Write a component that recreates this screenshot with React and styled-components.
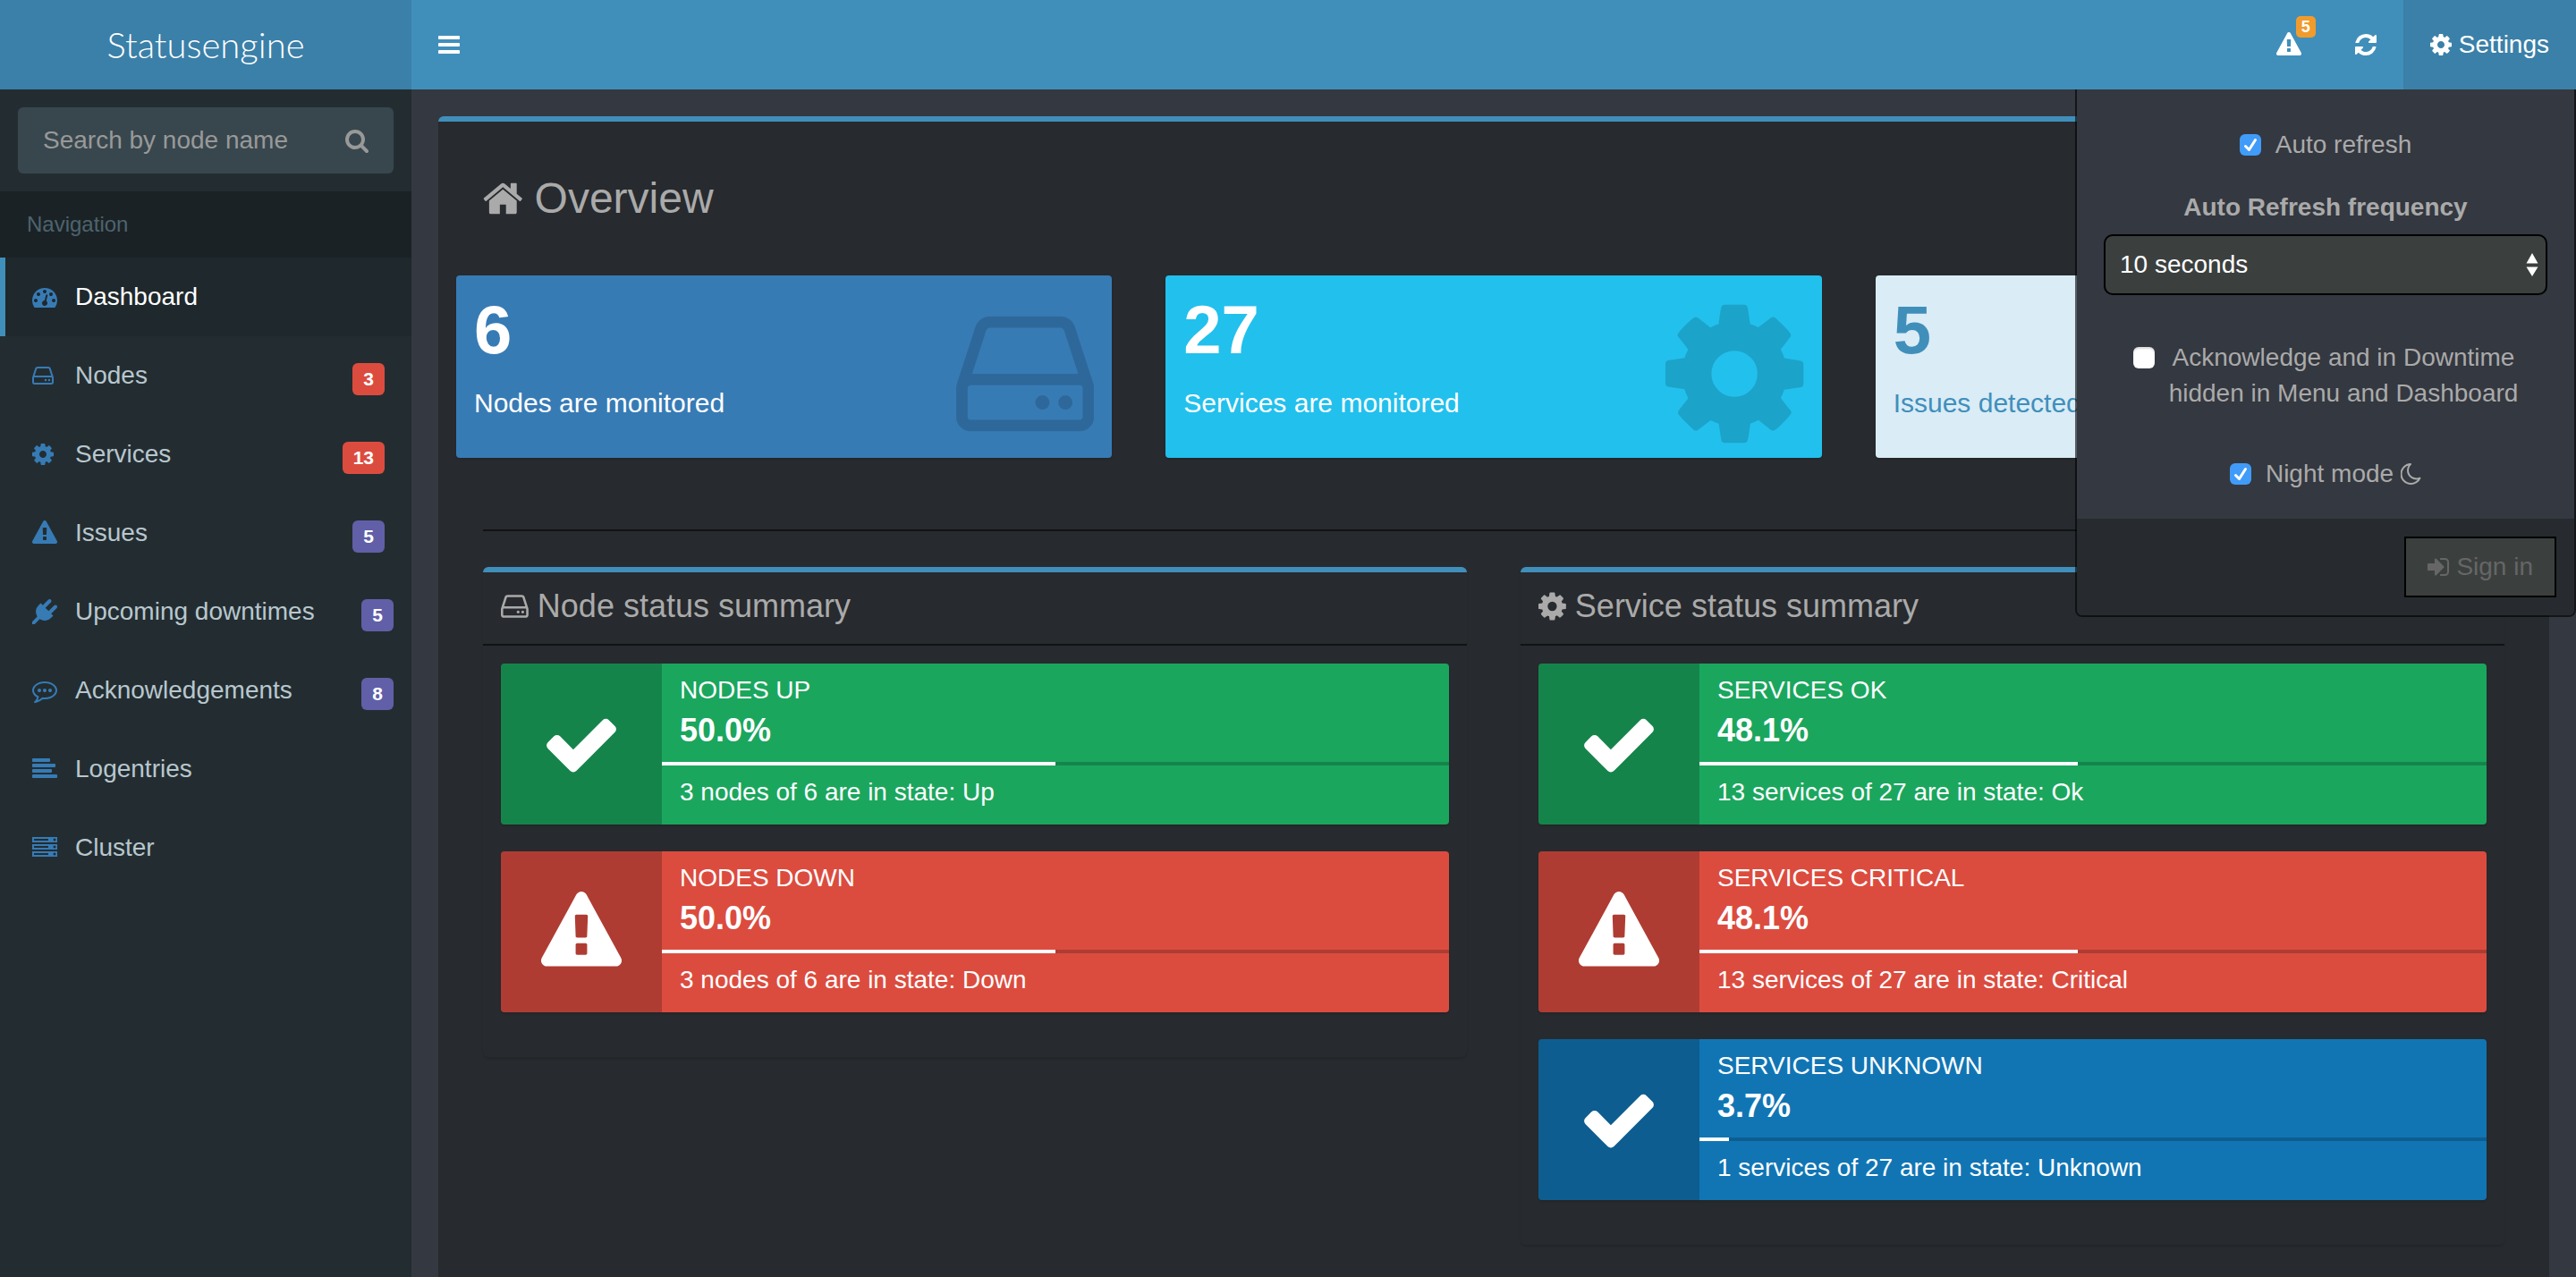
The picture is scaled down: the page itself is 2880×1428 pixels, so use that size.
import React, { useState } from 'react';
import styled, { createGlobalStyle } from 'styled-components';

const color = {
  header: '#408fbb',
  headerDark: '#3b80a8',
  sidebar: '#232d31',
  sidebarHeader: '#1b2225',
  sidebarActive: '#1f282c',
  page: '#343840',
  box: '#272a2e',
  line: '#111214',
  field: '#3b403f',
  text: '#aaaaaa',
  icon: '#377bb5',
  red: '#db4c3f',
  purple: '#615fa7',
  orange: '#f19b2d',
  green: '#1ba65e',
  blue: '#1175b4',
  aqua: '#22c0ed',
};

/* Each glyph: left edge, width and outline on a 1792-unit em. */
const glyphs = {
  bars: [128, 1536, 'M1664 1344v128q0 26-19 45t-45 19h-1408q-26 0-45-19t-19-45v-128q0-26 19-45t45-19h1408q26 0 45 19t19 45zm0-512v128q0 26-19 45t-45 19h-1408q-26 0-45-19t-19-45v-128q0-26 19-45t45-19h1408q26 0 45 19t19 45zm0-512v128q0 26-19 45t-45 19h-1408q-26 0-45-19t-19-45v-128q0-26 19-45t45-19h1408q26 0 45 19t19 45z'],
  cog: [128, 1536, 'M1152 896q0-106-75-181t-181-75-181 75-75 181 75 181 181 75 181-75 75-181zm512-109v222q0 12-8 23t-20 13l-185 28q-19 54-39 91 35 50 107 138 10 12 10 25t-9 23q-27 37-99 108t-94 71q-12 0-26-9l-138-108q-44 23-91 38-16 136-29 186-7 28-36 28h-222q-14 0-24.5-8.5t-11.5-21.5l-28-184q-49-16-90-37l-141 107q-10 9-25 9-14 0-25-11-126-114-165-168-7-10-7-23 0-12 8-23 15-21 51-66.5t54-70.5q-27-50-41-99l-183-27q-13-2-21-12.5t-8-23.5v-222q0-12 8-23t19-13l186-28q14-46 39-92-40-57-107-138-10-12-10-24 0-10 9-23 26-36 98.5-107.5t94.5-71.5q13 0 26 10l138 107q44-23 91-38 16-136 29-186 7-28 36-28h222q14 0 24.5 8.5t11.5 21.5l28 184q49 16 90 37l142-107q9-9 24-9 13 0 25 10 129 119 165 170 7 8 7 22 0 12-8 23-15 21-51 66.5t-54 70.5q26 50 41 98l183 28q13 2 21 12.5t8 23.5z'],
  warning: [0, 1792, 'M1024 1375v-190q0-14-9.5-23.5t-22.5-9.5h-192q-13 0-22.5 9.5t-9.5 23.5v190q0 14 9.5 23.5t22.5 9.5h192q13 0 22.5-9.5t9.5-23.5zm-2-374l18-459q0-12-10-19-13-11-24-11h-220q-11 0-24 11-10 7-10 21l17 457q0 10 10 16.5t24 6.5h185q14 0 23.5-6.5t10.500-16.5zm-14-934l768 1408q35 63-2 126-17 29-46.5 46t-63.5 17h-1536q-34 0-63.500-17t-46.500-46q-37-63-2-126l768-1408q17-31 47-49t65-18 65 18 47 49z'],
  refresh: [128, 1536, 'M1639 1056q0 5-1 7-64 268-268 434.5t-478 166.5q-146 0-282.5-55t-243.5-157l-129 129q-19 19-45 19t-45-19-19-45v-448q0-26 19-45t45-19h448q26 0 45 19t19 45-19 45l-137 137q71 66 161 102t187 36q134 0 250-65t186-179q11-17 53-117 8-23 30-23h192q13 0 22.5 9.5t9.5 22.5zm25-800v448q0 26-19 45t-45 19h-448q-26 0-45-19t-19-45 19-45l138-138q-148-137-349-137-134 0-250 65t-186 179q-11 17-53 117-8 23-30 23h-199q-13 0-22.5-9.5t-9.5-22.5v-7q65-268 270-434.5t480-166.5q146 0 284 55.5t245 156.5l130-129q19-19 45-19t45 19 19 45z'],
  search: [64, 1664, 'M1216 832q0-185-131.5-316.5t-316.5-131.5-316.5 131.5-131.5 316.5 131.5 316.5 316.5 131.5 316.5-131.5 131.5-316.5zm512 832q0 52-38 90t-90 38q-54 0-90-38l-343-342q-179 124-399 124-143 0-273.5-55.5t-225-150-150-225-55.5-273.5 55.5-273.5 150-225 225-150 273.5-55.5 273.5 55.5 225 150 150 225 55.5 273.5q0 220-124 399l343 343q37 37 37 90z'],
  dashboard: [0, 1792, 'M384 1152q0-53-37.5-90.5t-90.5-37.5-90.5 37.5-37.5 90.5 37.5 90.5 90.5 37.5 90.5-37.5 37.5-90.5zm192-448q0-53-37.5-90.5t-90.5-37.5-90.5 37.5-37.5 90.5 37.5 90.5 90.5 37.5 90.5-37.5 37.5-90.5zm428 481l101-382q6-26-7.5-48.5t-38.5-29.5-48 6.5-30 39.5l-101 382q-60 5-107 43.5t-63 98.5q-20 77 20 146t117 89 146-20 89-117q16-60-6-117t-72-91zm660-33q0-53-37.5-90.5t-90.5-37.5-90.5 37.5-37.5 90.5 37.5 90.5 90.5 37.5 90.5-37.5 37.5-90.5zm-640-640q0-53-37.5-90.5t-90.5-37.5-90.5 37.5-37.5 90.5 37.5 90.5 90.5 37.5 90.5-37.5 37.5-90.5zm448 192q0-53-37.5-90.5t-90.5-37.5-90.5 37.5-37.5 90.5 37.5 90.5 90.5 37.5 90.5-37.5 37.5-90.5zm320 448q0 261-141 483-19 29-54 29h-1402q-35 0-54-29-141-221-141-483 0-182 71-348t191-286 286-191 348-71 348 71 286 191 191 286 71 348z'],
  disk: [128, 1536, 'M1168 1216q0 33-23.5 56.5t-56.5 23.5-56.5-23.5-23.5-56.5 23.5-56.5 56.5-23.5 56.5 23.5 23.5 56.5zm256 0q0 33-23.5 56.5t-56.5 23.5-56.5-23.5-23.5-56.5 23.5-56.5 56.5-23.5 56.5 23.5 23.5 56.5zm112 160v-320q0-13-9.5-22.5t-22.5-9.5h-1216q-13 0-22.5 9.5t-9.5 22.5v320q0 13 9.5 22.5t22.5 9.5h1216q13 0 22.5-9.5t9.5-22.5zm-1230-480h1180l-157-482q-4-13-16-21.5t-26-8.5h-782q-14 0-26 8.5t-16 21.5zm1358 160v320q0 66-47 113t-113 47h-1216q-66 0-113-47t-47-113v-320q0-25 16-75l197-606q17-53 63-86t101-33h782q55 0 101 33t63 86l197 606q16 50 16 75z'],
  plug: [0, 1792, 'M1755 453q37 38 37 90.5t-37 90.5l-401 400 150 150-160 160q-163 163-389.5 186.5t-411.5-100.5l-362 362h-181v-181l362-362q-124-185-100.5-411.5t186.5-389.5l160-160 150 150 400-401q38-37 91-37t90 37 37 90.5-37 90.5l-400 401 234 234 401-400q38-37 91-37t90 37z'],
  comment: [0, 1792, 'M640 896q0 53-37.5 90.5t-90.5 37.5-90.5-37.5-37.5-90.5 37.5-90.5 90.5-37.5 90.5 37.5 37.5 90.5zm384 0q0 53-37.5 90.5t-90.5 37.5-90.5-37.5-37.5-90.5 37.5-90.5 90.5-37.5 90.5 37.5 37.5 90.5zm384 0q0 53-37.5 90.5t-90.5 37.5-90.5-37.5-37.5-90.5 37.5-90.5 90.5-37.5 90.5 37.5 37.5 90.5zm-512-512q-204 0-381.5 69.5t-282 187.5-104.5 255q0 112 71.5 213.5t201.5 175.5l87 50-27 96q-24 91-70 172 152-63 275-171l43-38 57 6q69 8 130 8 204 0 381.5-69.5t282-187.5 104.5-255-104.5-255-282-187.5-381.5-69.5zm896 512q0 174-120 321.5t-326 233-450 85.5q-70 0-145-8-198 175-460 242-49 14-114 22h-5q-15 0-27-10.5t-16-27.5v-1q-3-4-.5-12t2-10 4.500-9.500l6-9 7-8.500 8-9q7-8 31-34.500t34.500-38 31-39.500 32.500-51 27-59 26-76q-157-89-247.500-220t-90.500-281q0-130 71-248.500t191-204.500 286-136.500 348-50.500 348 50.500 286 136.500 191 204.500 71 248.500z'],
  lines: [0, 1792, 'M1792 1344v128q0 26-19 45t-45 19h-1664q-26 0-45-19t-19-45v-128q0-26 19-45t45-19h1664q26 0 45 19t19 45zm-384-384v128q0 26-19 45t-45 19h-1280q-26 0-45-19t-19-45v-128q0-26 19-45t45-19h1280q26 0 45 19t19 45zm256-384v128q0 26-19 45t-45 19h-1536q-26 0-45-19t-19-45v-128q0-26 19-45t45-19h1536q26 0 45 19t19 45zm-384-384v128q0 26-19 45t-45 19h-1152q-26 0-45-19t-19-45v-128q0-26 19-45t45-19h1152q26 0 45 19t19 45z'],
  server: [0, 1792, 'M128 1408h1024v-128h-1024v128zm0-512h1024v-128h-1024v128zm1568 448q0-40-28-68t-68-28-68 28-28 68 28 68 68 28 68-28 28-68zm-1568-960h1024v-128h-1024v128zm1568 448q0-40-28-68t-68-28-68 28-28 68 28 68 68 28 68-28 28-68zm0-512q0-40-28-68t-68-28-68 28-28 68 28 68 68 28 68-28 28-68zm96 832v384h-1792v-384h1792zm0-512v384h-1792v-384h1792zm0-512v384h-1792v-384h1792z'],
  check: [0, 1792, 'M1671 566q0 40-28 68l-724 724-136 136q-28 28-68 28t-68-28l-136-136-362-362q-28-28-28-68t28-68l136-136q28-28 68-28t68 28l294 295 656-657q28-28 68-28t68 28l136 136q28 28 28 68z'],
  moon: [160, 1472, 'M1390 1303q-54 9-110 9-182 0-337-90t-245-245-90-337q0-192 104-357-201 60-328.5 229t-127.5 384q0 130 51 248.5t136.5 204 204 136.5 248.5 51q144 0 273.5-61.5t220.5-171.5zm203-85q-94 203-283.5 324.5t-413.5 121.5q-156 0-298-61t-245-164-164-245-61-298q0-153 57.5-292.5t156-241.5 235.5-164.5 290-68.5q44-2 61 39 18 41-15 72-86 78-131.5 181.5t-45.5 218.5q0 148 73 273t198 198 273 73q118 0 228-51 41-18 72 13 14 14 17.5 34t-4.5 38z'],
  signIn: [128, 1536, 'M1312 896q0 26-19 45l-544 544q-19 19-45 19t-45-19-19-45v-288h-448q-26 0-45-19t-19-45v-384q0-26 19-45t45-19h448v-288q0-26 19-45t45-19 45 19l544 544q19 19 19 45zm352-352v704q0 119-84.5 203.5t-203.5 84.5h-320q-13 0-22.5-9.5t-9.5-22.5q0-4-1-20t-.5-26.5 3-23.5 10-19.5 20.5-6.5h320q66 0 113-47t47-113v-704q0-66-47-113t-113-47h-312l-11.5-1-11.5-3-8-5.5-7-9-2-13.500q0-4-1-20t-.5-26.500 3-23.500 10-19.500 20.500-6.500h320q119 0 203.500 84.500t84.500 203.500z'],
  home: [64, 1664, 'M1472 992v480q0 26-19 45t-45 19h-384v-384h-256v384h-384q-26 0-45-19t-19-45v-480q0-1 .5-3t.5-3l575-474 575 474q1 2 1 6zm223-69l-62 74q-8 9-21 11h-3q-13 0-21-7l-692-577-692 577q-12 8-24 7-13-2-21-11l-62-74q-8-10-7-23.5t11-21.5l719-599q32-26 76-26t76 26l244 204v-195q0-14 9-23t23-9h192q14 0 23 9t9 23v408l219 182q10 8 11 21.5t-7 23.5z'],
};

const Svg = styled.svg`
  display: block;
  flex: none;
  height: ${(p) => p.$size}px;
  fill: currentColor;
`;

function Icon({ name, size = 28 }) {
  const [left, width, d] = glyphs[name];
  return (
    <Svg $size={size} viewBox={`${left} 0 ${width} 1792`} aria-hidden="true">
      <path d={d} />
    </Svg>
  );
}

const GlobalStyle = createGlobalStyle`
  *, *::before, *::after { box-sizing: border-box; }
  body {
    margin: 0;
    background: ${color.page};
    color: ${color.text};
    font-family: "Liberation Sans", Arial, Helvetica, sans-serif;
    font-size: 28px;
    line-height: 40px;
  }
  h1, h2, p { margin: 0; font-weight: 400; }
  button, input, select { font: inherit; color: inherit; margin: 0; }
  a { color: inherit; text-decoration: none; }
`;

const Page = styled.div`
  display: flex;
  flex-direction: column;
  min-height: 100vh;
`;

const Header = styled.header`
  display: flex;
  height: 100px;
  background: ${color.header};
  color: #fff;
`;

const Logo = styled.a`
  flex: none;
  width: 460px;
  background: ${color.headerDark};
  font-family: Lato, "Liberation Sans", sans-serif;
  font-size: 40px;
  font-weight: 300;
  line-height: 100px;
  text-align: center;
`;

const TopNav = styled.nav`
  display: flex;
  flex: 1;
  justify-content: space-between;
`;

const TopGroup = styled.div`
  position: relative;
  display: flex;
`;

const TopButton = styled.button`
  position: relative;
  display: flex;
  align-items: center;
  gap: 8px;
  padding: 0 30px;
  border: 0;
  background: ${(p) => (p.$open ? color.headerDark : 'transparent')};
  cursor: pointer;
`;

const AlertCount = styled.span`
  position: absolute;
  top: 18px;
  right: 14px;
  padding: 0 6px;
  border-radius: 5px;
  background: ${color.orange};
  font-size: 18px;
  font-weight: 700;
  line-height: 24px;
`;

const SettingsPanel = styled.form`
  position: absolute;
  top: 100px;
  right: 0;
  z-index: 2;
  width: 560px;
  border: 2px solid rgba(0, 0, 0, 0.6);
  border-top: 0;
  border-radius: 0 0 8px 8px;
  background: ${color.page};
  background-clip: padding-box;
  color: ${color.text};
`;

const SettingsBody = styled.div`
  display: flex;
  flex-direction: column;
  padding: 42px 30px 30px;
`;

const CheckLabel = styled.label`
  display: flex;
  justify-content: center;
  gap: 16px;
  text-align: center;
`;

const CheckText = styled.span`
  display: flex;
  align-items: center;
  gap: 8px;
  white-space: pre-line;
`;

const CheckWrap = styled.span`
  display: grid;
  flex: none;
  width: 24px;
  height: 24px;
  margin-top: 8px;
  > * { grid-area: 1 / 1; }
`;

const CheckInput = styled.input`
  appearance: none;
  width: 24px;
  height: 24px;
  border-radius: 6px;
  background: #fff;
  box-shadow: inset 0 2px 2px rgba(0, 0, 0, 0.15);
  &:checked {
    background: #419bf9;
    box-shadow: none;
  }
  & + svg { visibility: hidden; }
  &:checked + svg { visibility: visible; }
`;

const Tick = styled.svg`
  width: 24px;
  height: 24px;
  fill: none;
  stroke: #fff;
  stroke-width: 3;
  stroke-linecap: round;
  stroke-linejoin: round;
  pointer-events: none;
`;

const FieldLabel = styled.label`
  margin: 30px 0 10px;
  font-weight: 700;
  text-align: center;
`;

const SelectWrap = styled.div`
  display: grid;
  align-items: center;
  margin-bottom: 50px;
  > * { grid-area: 1 / 1; }
`;

const Select = styled.select`
  appearance: none;
  width: 100%;
  height: 68px;
  padding: 0 16px;
  border: 2px solid #000;
  border-radius: 10px;
  background: ${color.field};
  color: #fff;
`;

const SelectArrows = styled.svg`
  justify-self: end;
  width: 14px;
  height: 30px;
  margin-right: 10px;
  fill: #fff;
  pointer-events: none;
`;

const NightRow = styled.div`
  margin-top: 50px;
`;

const SettingsFooter = styled.div`
  display: flex;
  justify-content: flex-end;
  padding: 20px;
  border-radius: 0 0 6px 6px;
  background: ${color.box};
`;

const SignInButton = styled.button`
  display: flex;
  align-items: center;
  gap: 8px;
  height: 68px;
  padding: 0 24px;
  border: 2px solid #000;
  background: ${color.field};
  color: #666;
`;

const Columns = styled.div`
  display: flex;
  flex: 1;
`;

const Sidebar = styled.aside`
  flex: none;
  width: 460px;
  background: ${color.sidebar};
  color: #b8c7ce;
`;

const SearchForm = styled.form`
  display: flex;
  align-items: center;
  height: 74px;
  margin: 20px;
  border-radius: 6px;
  background: #38474e;
  color: #999;
`;

const SearchInput = styled.input`
  flex: 1;
  min-width: 0;
  height: 74px;
  padding: 0 0 0 28px;
  border: 0;
  outline: 0;
  background: transparent;
  &::placeholder { color: #999; opacity: 1; }
`;

const SearchButton = styled.button`
  padding: 0 28px;
  border: 0;
  background: transparent;
`;

const NavHeading = styled.div`
  padding: 17px 30px;
  background: ${color.sidebarHeader};
  color: #4d646e;
  font-size: 24px;
`;

const NavLink = styled.a`
  display: flex;
  align-items: center;
  height: 88px;
  padding: 0 ${(p) => (p.$wide ? 20 : 30)}px 0 30px;
  border-left: 6px solid ${(p) => (p.$active ? color.header : 'transparent')};
  background: ${(p) => (p.$active ? color.sidebarActive : 'transparent')};
  color: ${(p) => (p.$active ? '#fff' : 'inherit')};
`;

const NavIcon = styled.span`
  width: 48px;
  color: ${color.icon};
`;

const NavText = styled.span`
  flex: 1;
  white-space: nowrap;
`;

const Badge = styled.span`
  margin-top: 8px;
  padding: 0 12px;
  border-radius: 6px;
  background: ${(p) => p.$color};
  color: #fff;
  font-size: 21px;
  font-weight: 700;
  line-height: 36px;
`;

const Content = styled.main`
  display: flex;
  flex: 1;
  flex-direction: column;
  min-width: 0;
  padding: 30px 30px 0;
`;

const Box = styled.section`
  flex: 1;
  border-top: 6px solid ${color.header};
  border-radius: 6px 6px 0 0;
  background: ${color.box};
`;

const Title = styled.h1`
  display: flex;
  align-items: center;
  gap: 13px;
  padding: 60px 50px;
  font-size: 48px;
  line-height: 52px;
`;

const Tiles = styled.div`
  display: grid;
  grid-template-columns: repeat(3, 1fr);
  gap: 60px;
  padding: 0 20px;
`;

const Tile = styled.a`
  display: flex;
  justify-content: space-between;
  padding: 20px;
  border-radius: 4px;
  background: ${(p) => p.$color};
  box-shadow: 0 2px 2px rgba(0, 0, 0, 0.1);
  color: ${(p) => p.$ink};
`;

const TileText = styled.div`
  padding-bottom: 20px;
`;

const TileNumber = styled.p`
  margin-bottom: 20px;
  font-size: 76px;
  font-weight: 700;
  line-height: 82px;
`;

const TileLabel = styled.p`
  font-size: 30px;
  line-height: 42px;
`;

const TileIcon = styled.div`
  height: 164px;
  color: rgba(0, 0, 0, 0.15);
`;

const Rule = styled.hr`
  height: 2px;
  margin: 80px 50px 40px;
  border: 0;
  background: ${color.line};
`;

const Summaries = styled.div`
  display: grid;
  grid-template-columns: repeat(2, 1fr);
  align-items: start;
  gap: 60px;
  padding: 0 50px 30px;
`;

const Summary = styled.section`
  border-top: 6px solid ${color.header};
  border-radius: 6px;
  box-shadow: 0 2px 2px rgba(0, 0, 0, 0.1);
`;

const SummaryTitle = styled.h2`
  display: flex;
  align-items: center;
  gap: 10px;
  padding: 18px 20px 22px;
  border-bottom: 2px solid ${color.line};
  font-size: 36px;
`;

const SummaryBody = styled.div`
  display: flex;
  flex-direction: column;
  gap: 30px;
  padding: 20px 20px 50px;
`;

const StateBox = styled.div`
  display: flex;
  min-height: 180px;
  border-radius: 4px;
  background: ${(p) => p.$color};
  box-shadow: 0 2px 2px rgba(0, 0, 0, 0.1);
  color: #fff;
`;

const StateIcon = styled.div`
  display: flex;
  align-items: center;
  justify-content: center;
  width: 180px;
  border-radius: 4px 0 0 4px;
  background: rgba(0, 0, 0, 0.2);
`;

const StateText = styled.div`
  flex: 1;
  padding: 10px 0;
`;

const StateLine = styled.p`
  padding: 0 20px;
`;

const StateNumber = styled.p`
  padding: 0 20px;
  font-size: 36px;
  font-weight: 700;
  line-height: 50px;
`;

const Progress = styled.div`
  height: 4px;
  margin: 10px 0;
  background: rgba(0, 0, 0, 0.2);
`;

const ProgressFill = styled.div`
  height: 4px;
  background: #fff;
`;

const navItems = [
  { icon: 'dashboard', label: 'Dashboard', active: true },
  { icon: 'disk', label: 'Nodes', count: 3, tone: color.red },
  { icon: 'cog', label: 'Services', count: 13, tone: color.red },
  { icon: 'warning', label: 'Issues', count: 5, tone: color.purple },
  { icon: 'plug', label: 'Upcoming downtimes', count: 5, tone: color.purple, wide: true },
  { icon: 'comment', label: 'Acknowledgements', count: 8, tone: color.purple, wide: true },
  { icon: 'lines', label: 'Logentries' },
  { icon: 'server', label: 'Cluster' },
];

const tiles = [
  { value: 6, label: 'Nodes are monitored', icon: 'disk', tone: color.icon, ink: '#fff' },
  { value: 27, label: 'Services are monitored', icon: 'cog', tone: color.aqua, ink: '#fff' },
  { value: 5, label: 'Issues detected', icon: 'warning', tone: '#daecf6', ink: color.header },
];

const summaries = [
  {
    title: 'Node status summary',
    icon: 'disk',
    states: [
      { name: 'NODES UP', percent: '50.0', text: '3 nodes of 6 are in state: Up', icon: 'check', tone: color.green },
      { name: 'NODES DOWN', percent: '50.0', text: '3 nodes of 6 are in state: Down', icon: 'warning', tone: color.red },
    ],
  },
  {
    title: 'Service status summary',
    icon: 'cog',
    states: [
      { name: 'SERVICES OK', percent: '48.1', text: '13 services of 27 are in state: Ok', icon: 'check', tone: color.green },
      { name: 'SERVICES CRITICAL', percent: '48.1', text: '13 services of 27 are in state: Critical', icon: 'warning', tone: color.red },
      { name: 'SERVICES UNKNOWN', percent: '3.7', text: '1 services of 27 are in state: Unknown', icon: 'check', tone: color.blue },
    ],
  },
];

function Checkbox({ id, initial = false, children }) {
  const [on, setOn] = useState(initial);
  return (
    <CheckLabel htmlFor={id}>
      <CheckWrap>
        <CheckInput id={id} type="checkbox" checked={on} onChange={() => setOn(!on)} />
        <Tick viewBox="0 0 24 24" aria-hidden="true">
          <path d="M6.500 13.500 10.500 17.500 17.500 6.500" />
        </Tick>
      </CheckWrap>
      <CheckText>{children}</CheckText>
    </CheckLabel>
  );
}

function Settings() {
  return (
    <SettingsPanel onSubmit={(e) => e.preventDefault()}>
      <SettingsBody>
        <Checkbox id="auto-refresh" initial>Auto refresh</Checkbox>
        <FieldLabel htmlFor="frequency">Auto Refresh frequency</FieldLabel>
        <SelectWrap>
          <Select id="frequency" defaultValue="10">
            <option value="10">10 seconds</option>
            <option value="30">30 seconds</option>
            <option value="60">60 seconds</option>
          </Select>
          <SelectArrows viewBox="0 0 14 30" aria-hidden="true">
            <path d="M7 2 13.500 13.500H.5ZM7 28 .5 17.500H13.500Z" />
          </SelectArrows>
        </SelectWrap>
        <Checkbox id="hide-acknowledged">{'Acknowledge and in Downtime\nhidden in Menu and Dashboard'}</Checkbox>
        <NightRow>
          <Checkbox id="night-mode" initial>
            Night mode
            <Icon name="moon" />
          </Checkbox>
        </NightRow>
      </SettingsBody>
      <SettingsFooter>
        <SignInButton type="submit">
          <Icon name="signIn" />
          Sign in
        </SignInButton>
      </SettingsFooter>
    </SettingsPanel>
  );
}

export default function App() {
  const [open, setOpen] = useState(true);
  return (
    <Page>
      <GlobalStyle />
      <Header>
        <Logo href="#home">Statusengine</Logo>
        <TopNav>
          <TopButton type="button" aria-label="Toggle navigation">
            <Icon name="bars" />
          </TopButton>
          <TopGroup>
            <TopButton type="button" aria-label="Issues">
              <Icon name="warning" />
              <AlertCount>5</AlertCount>
            </TopButton>
            <TopButton type="button" aria-label="Refresh">
              <Icon name="refresh" />
            </TopButton>
            <TopButton type="button" $open={open} aria-expanded={open} onClick={() => setOpen(!open)}>
              <Icon name="cog" />
              Settings
            </TopButton>
            {open && <Settings />}
          </TopGroup>
        </TopNav>
      </Header>
      <Columns>
        <Sidebar>
          <SearchForm role="search" onSubmit={(e) => e.preventDefault()}>
            <SearchInput type="text" placeholder="Search by node name" aria-label="Search by node name" />
            <SearchButton type="submit" aria-label="Search">
              <Icon name="search" />
            </SearchButton>
          </SearchForm>
          <NavHeading>Navigation</NavHeading>
          <nav>
            {navItems.map((item) => (
              <NavLink key={item.label} href={`#${item.icon}`} $active={item.active} $wide={item.wide}>
                <NavIcon>
                  <Icon name={item.icon} />
                </NavIcon>
                <NavText>{item.label}</NavText>
                {item.count && <Badge $color={item.tone}>{item.count}</Badge>}
              </NavLink>
            ))}
          </nav>
        </Sidebar>
        <Content>
          <Box>
            <Title>
              <Icon name="home" size={48} />
              Overview
            </Title>
            <Tiles>
              {tiles.map((tile) => (
                <Tile key={tile.label} href={`#${tile.icon}`} $color={tile.tone} $ink={tile.ink}>
                  <TileText>
                    <TileNumber>{tile.value}</TileNumber>
                    <TileLabel>{tile.label}</TileLabel>
                  </TileText>
                  <TileIcon>
                    <Icon name={tile.icon} size={180} />
                  </TileIcon>
                </Tile>
              ))}
            </Tiles>
            <Rule />
            <Summaries>
              {summaries.map((summary) => (
                <Summary key={summary.title}>
                  <SummaryTitle>
                    <Icon name={summary.icon} size={36} />
                    {summary.title}
                  </SummaryTitle>
                  <SummaryBody>
                    {summary.states.map((state) => (
                      <StateBox key={state.name} $color={state.tone}>
                        <StateIcon>
                          <Icon name={state.icon} size={90} />
                        </StateIcon>
                        <StateText>
                          <StateLine>{state.name}</StateLine>
                          <StateNumber>{state.percent}%</StateNumber>
                          <Progress>
                            <ProgressFill style={{ width: `${state.percent}%` }} />
                          </Progress>
                          <StateLine>{state.text}</StateLine>
                        </StateText>
                      </StateBox>
                    ))}
                  </SummaryBody>
                </Summary>
              ))}
            </Summaries>
          </Box>
        </Content>
      </Columns>
    </Page>
  );
}
